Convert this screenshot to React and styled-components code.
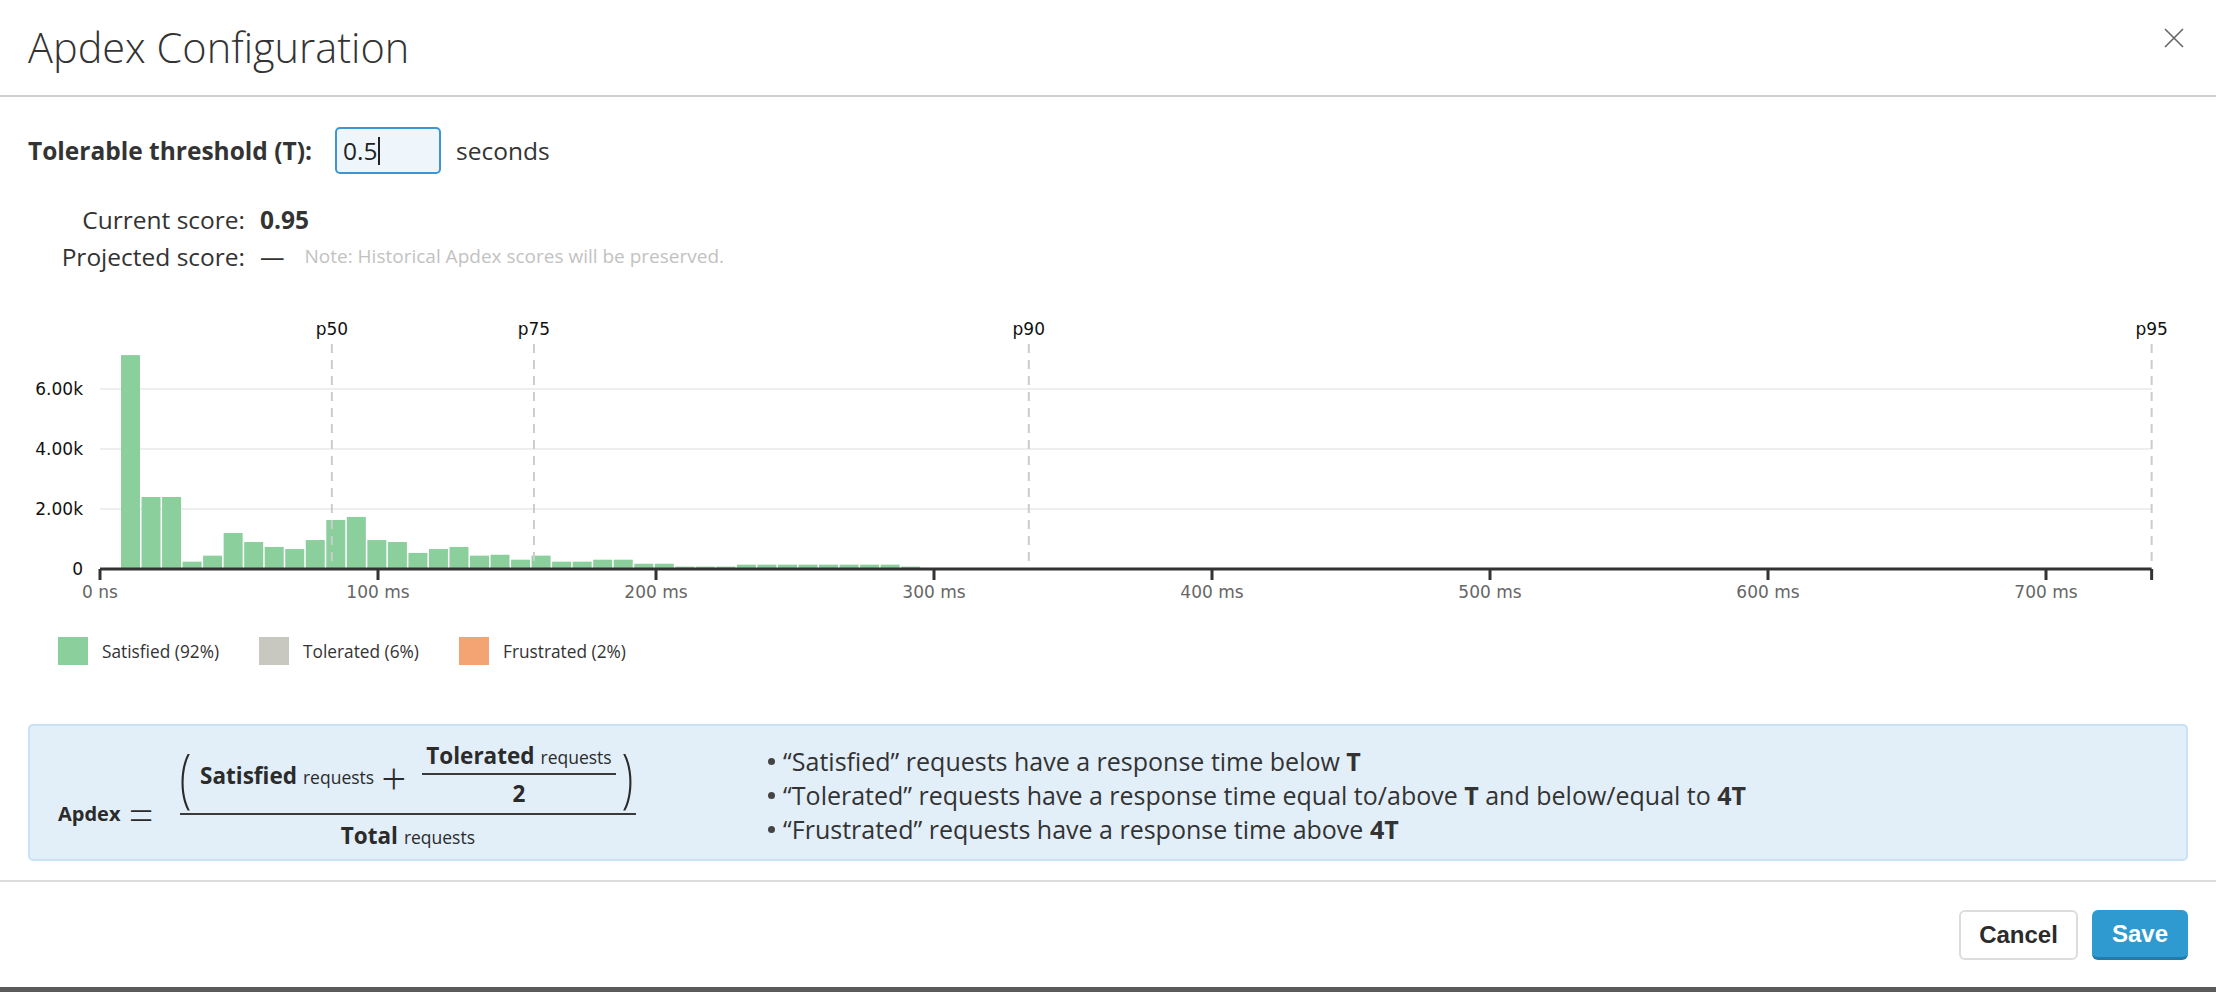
import React from 'react'
import styled, { createGlobalStyle } from 'styled-components'

const GlobalStyle = createGlobalStyle`
  html, body {
    margin: 0;
    padding: 0;
    background: #fff;
  }
  body {
    font-family: 'Open Sans', 'Liberation Sans', sans-serif;
    color: #333;
  }
  * {
    box-sizing: border-box;
  }
`

const Modal = styled.div`
  width: 2216px;
  height: 992px;
  display: flex;
  flex-direction: column;
  background: #fff;
  border-bottom: 5px solid #5b5b5b;
`

const Header = styled.header`
  height: 97px;
  flex: none;
  display: flex;
  align-items: center;
  justify-content: space-between;
  padding: 0 32px 2px 28px;
  border-bottom: 2px solid #cfcfcf;
`

const Title = styled.h1`
  margin: 0;
  font-size: 41.5px;
  font-weight: 300;
  color: #333;
`

const CloseButton = styled.button`
  align-self: flex-start;
  margin-top: 28px;
  width: 20px;
  height: 20px;
  padding: 0;
  border: 0;
  background: none;
  cursor: pointer;
  & svg {
    display: block;
  }
`

const Body = styled.main`
  flex: 1;
  display: flex;
  flex-direction: column;
  padding: 0 28px;
`

const ThresholdRow = styled.div`
  display: flex;
  align-items: center;
  height: 47px;
  margin-top: 30px;
  font-size: 24.5px;
`

const FieldLabel = styled.label`
  font-weight: 700;
  margin-right: 23px;
`

const Field = styled.div`
  width: 106px;
  height: 47px;
  display: flex;
  align-items: center;
  padding-left: 6px;
  border: 2px solid #3b97d3;
  border-radius: 5px;
  background: #eef6fc;
  color: #222;
  margin-right: 15px;
`

const Caret = styled.span`
  width: 2px;
  height: 28px;
  margin-left: 1px;
  background: #222;
`

const Scores = styled.dl`
  margin: 27px 0 0;
  display: grid;
  grid-template-columns: 217px auto;
  column-gap: 15px;
  font-size: 24.5px;
  line-height: 37px;
`

const ScoreLabel = styled.dt`
  text-align: right;
`

const ScoreValue = styled.dd`
  margin: 0;
  display: flex;
  align-items: center;
  gap: 20px;
  font-weight: ${(p) => (p.strong ? 700 : 400)};
`

const Note = styled.span`
  font-size: 19px;
  font-weight: 400;
  color: #c2c2c2;
`

const Chart = styled.svg`
  display: block;
  margin-top: 24px;
  font-family: 'DejaVu Sans', 'Liberation Sans', sans-serif;
  font-size: 17px;
`

const Legend = styled.ul`
  display: flex;
  align-items: center;
  gap: 40px;
  height: 28px;
  margin: 26px 0 0;
  padding: 0 0 0 30px;
  list-style: none;
  font-size: 17.3px;
  color: #333;
`

const LegendItem = styled.li`
  display: flex;
  align-items: center;
  gap: 14px;
`

const Swatch = styled.span`
  width: 30px;
  height: 28px;
  background: ${(p) => p.color};
`

const FormulaBox = styled.section`
  margin-top: 59px;
  height: 137px;
  display: flex;
  align-items: center;
  padding-left: 28px;
  background: #e2eff9;
  border: 2px solid #c8e2f3;
  border-radius: 5px;
`

const MathBlock = styled.div`
  align-self: flex-start;
  display: flex;
  align-items: flex-start;
  padding-top: 14px;
  color: #2b2b2b;
  font-size: 22.5px;
`

const MathLabel = styled.span`
  margin-top: 60px;
  line-height: 28px;
  font-size: 20px;
  font-weight: 700;
`

const Equals = styled.span`
  margin: 60px 26px 0 8px;
  line-height: 28px;
  font-size: 44px;
  font-weight: 300;
`

const Fraction = styled.div`
  display: flex;
  flex-direction: column;
`

const Numerator = styled.div`
  height: 70px;
  display: flex;
  align-items: center;
`

const Paren = styled.span`
  display: inline-block;
  font-size: 42px;
  font-weight: 300;
  line-height: 1;
  transform: scaleY(1.55);
  margin: ${(p) => (p.close ? '0 3px 0 6px' : '0 9px 0 0')};
`

const Term = styled.span`
  font-weight: 700;
  white-space: nowrap;
`

const Sub = styled.span`
  font-size: 17.5px;
  font-weight: 400;
  margin-left: 6px;
`

const Plus = styled.span`
  font-size: 44px;
  line-height: 1;
  font-weight: 300;
  margin: 0 16px 0 7px;
  transform: translateY(3px);
`

const InnerFraction = styled.div`
  display: flex;
  flex-direction: column;
  align-items: stretch;
  text-align: center;
  line-height: 26px;
`

const FractionBar = styled.div`
  height: 2px;
  background: #3a3a3a;
  margin: ${(p) => (p.inner ? '3px 0 6px' : '3px 0 7px')};
`

const InnerTop = styled.div`
  padding: 0 4px;
`

const Denominator = styled.div`
  text-align: center;
  line-height: 28px;
`

const Rules = styled.ul`
  margin: 5px 0 0 132px;
  padding: 0;
  list-style: none;
  font-size: 25px;
  line-height: 34px;
  color: #333;
`

const Rule = styled.li`
  position: relative;
  padding-left: 15px;
  &::before {
    content: '';
    position: absolute;
    left: 0;
    top: 14px;
    width: 7px;
    height: 7px;
    border-radius: 50%;
    background: #444;
  }
`

const Footer = styled.footer`
  height: 107px;
  flex: none;
  display: flex;
  justify-content: flex-end;
  align-items: flex-start;
  gap: 14px;
  padding: 28px 28px 0;
  border-top: 2px solid #dcdcdc;
`

const Button = styled.button`
  height: 50px;
  padding: 0;
  width: ${(p) => (p.primary ? '96px' : '119px')};
  font-family: 'Liberation Sans', Arial, sans-serif;
  font-size: 24px;
  font-weight: 700;
  border-radius: 6px;
  cursor: pointer;
  color: ${(p) => (p.primary ? '#fff' : '#2b2b2b')};
  background: ${(p) => (p.primary ? '#2e9ad0' : '#fff')};
  border: ${(p) => (p.primary ? '0' : '2px solid #dcdcdc')};
  border-bottom: ${(p) => (p.primary ? '3px solid #217bab' : '2px solid #dcdcdc')};
`

// chart geometry, svg coords (svg left = page x 28, top = page y 300)
const CHART_W = 2160
const CHART_H = 312
const X0 = 72
const PX_PER_MS = 2.78
const AXIS_Y = 270
const PX_PER_COUNT = 0.03
const X_END = X0 + 738 * PX_PER_MS
const xAt = (ms) => X0 + ms * PX_PER_MS
const yAt = (n) => AXIS_Y - n * PX_PER_COUNT

const counts = [
  7130, 2400, 2400, 245, 445, 1200, 900, 735, 665, 965, 1635, 1735, 965, 900,
  535, 665, 735, 445, 475, 310, 445, 245, 245, 310, 310, 175, 175, 80, 80, 80,
  145, 145, 145, 145, 145, 145, 145, 145, 80,
]

const percentiles = [
  { label: 'p50', ms: 83.4 },
  { label: 'p75', ms: 156.1 },
  { label: 'p90', ms: 334.1 },
  { label: 'p95', ms: 738 },
]

const yTicks = [
  { v: 6000, label: '6.00k' },
  { v: 4000, label: '4.00k' },
  { v: 2000, label: '2.00k' },
  { v: 0, label: '0' },
]

const xTicks = [0, 100, 200, 300, 400, 500, 600, 700]

const Histogram = () => (
  <Chart width={CHART_W} height={CHART_H} viewBox={`0 0 ${CHART_W} ${CHART_H}`}>
    {yTicks
      .filter((t) => t.v > 0)
      .map((t) => (
        <line
          key={t.v}
          x1={X0}
          x2={X_END}
          y1={yAt(t.v)}
          y2={yAt(t.v)}
          stroke='#e8e8e8'
          strokeWidth='1.5'
        />
      ))}
    {yTicks.map((t) => (
      <text key={t.label} x='55' y={yAt(t.v) + 6} textAnchor='end' fill='#111'>
        {t.label}
      </text>
    ))}
    {counts.map((n, i) => (
      <rect
        key={i}
        x={93 + i * 20.53}
        y={yAt(n)}
        width='19'
        height={n * PX_PER_COUNT}
        fill='#8bcf9d'
      />
    ))}
    {percentiles.map((p) => (
      <g key={p.label}>
        <line
          x1={xAt(p.ms)}
          x2={xAt(p.ms)}
          y1='45'
          y2='268'
          stroke='#cccccc'
          strokeWidth='2'
          strokeDasharray='9 7'
        />
        <text x={xAt(p.ms)} y='36' textAnchor='middle' fill='#111'>
          {p.label}
        </text>
      </g>
    ))}
    <line x1={X0} x2={X_END} y1={AXIS_Y} y2={AXIS_Y} stroke='#333' strokeWidth='3' />
    {[...xTicks, 738].map((ms) => (
      <line
        key={ms}
        x1={xAt(ms)}
        x2={xAt(ms)}
        y1={AXIS_Y}
        y2={AXIS_Y + 11}
        stroke='#333'
        strokeWidth='3'
      />
    ))}
    {xTicks.map((ms) => (
      <text key={ms} x={xAt(ms)} y='299' textAnchor='middle' fill='#666'>
        {ms === 0 ? '0 ns' : `${ms} ms`}
      </text>
    ))}
  </Chart>
)

const legend = [
  { label: 'Satisfied (92%)', color: '#8bcf9d' },
  { label: 'Tolerated (6%)', color: '#c8c8c0' },
  { label: 'Frustrated (2%)', color: '#f4a373' },
]

export default function App() {
  return (
    <>
      <GlobalStyle />
      <Modal>
        <Header>
          <Title>Apdex Configuration</Title>
          <CloseButton aria-label='Close'>
            <svg width='20' height='20' viewBox='0 0 20 20'>
              <path d='M1 1 19 19M19 1 1 19' stroke='#666' strokeWidth='1.6' fill='none' />
            </svg>
          </CloseButton>
        </Header>
        <Body>
          <ThresholdRow>
            <FieldLabel>Tolerable threshold (T):</FieldLabel>
            <Field>
              0.5
              <Caret />
            </Field>
            <span>seconds</span>
          </ThresholdRow>
          <Scores>
            <ScoreLabel>Current score:</ScoreLabel>
            <ScoreValue strong>0.95</ScoreValue>
            <ScoreLabel>Projected score:</ScoreLabel>
            <ScoreValue>
              —<Note>Note: Historical Apdex scores will be preserved.</Note>
            </ScoreValue>
          </Scores>
          <Histogram />
          <Legend>
            {legend.map((l) => (
              <LegendItem key={l.label}>
                <Swatch color={l.color} />
                {l.label}
              </LegendItem>
            ))}
          </Legend>
          <FormulaBox>
            <MathBlock>
              <MathLabel>Apdex</MathLabel>
              <Equals>=</Equals>
              <Fraction>
                <Numerator>
                  <Paren>(</Paren>
                  <Term>
                    Satisfied<Sub>requests</Sub>
                  </Term>
                  <Plus>+</Plus>
                  <InnerFraction>
                    <InnerTop>
                      <Term>
                        Tolerated<Sub>requests</Sub>
                      </Term>
                    </InnerTop>
                    <FractionBar inner />
                    <Term>2</Term>
                  </InnerFraction>
                  <Paren close>)</Paren>
                </Numerator>
                <FractionBar />
                <Denominator>
                  <Term>
                    Total<Sub>requests</Sub>
                  </Term>
                </Denominator>
              </Fraction>
            </MathBlock>
            <Rules>
              <Rule>“Satisfied” requests have a response time below <b>T</b></Rule>
              <Rule>
                “Tolerated” requests have a response time equal to/above <b>T</b> and
                below/equal to <b>4T</b>
              </Rule>
              <Rule>“Frustrated” requests have a response time above <b>4T</b></Rule>
            </Rules>
          </FormulaBox>
        </Body>
        <Footer>
          <Button>Cancel</Button>
          <Button primary>Save</Button>
        </Footer>
      </Modal>
    </>
  )
}
